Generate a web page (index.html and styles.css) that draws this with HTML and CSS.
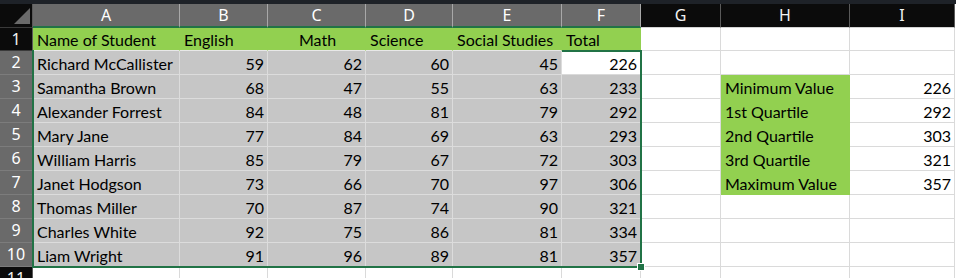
FILE: index.html
```html
<!DOCTYPE html>
<html lang="en">
<head>
  <meta charset="UTF-8" />
  <title>Quartiles</title>
  <link rel="stylesheet" href="styles.css">
</head>
<body>
  <div class="sheet">
    <div class="topbar"></div>

    <div class="grid">
      <!-- column headers -->
      <div class="corner">
        <svg width="16" height="16" viewBox="0 0 16 16"><polygon points="0,16 16,16 16,0" fill="#6a6a6a"/></svg>
      </div>
      <div class="ch on">A</div>
      <div class="ch on">B</div>
      <div class="ch on">C</div>
      <div class="ch on">D</div>
      <div class="ch on">E</div>
      <div class="ch on">F</div>
      <div class="ch">G</div>
      <div class="ch">H</div>
      <div class="ch">I</div>

      <!-- row 1 -->
      <div class="rh first">1</div>
      <div class="c head">Name of Student</div>
      <div class="c head">English</div>
      <div class="c head indent">Math</div>
      <div class="c head">Science</div>
      <div class="c head">Social Studies</div>
      <div class="c head">Total</div>
      <div class="c first"></div>
      <div class="c first"></div>
      <div class="c first"></div>

      <!-- row 2 -->
      <div class="rh on">2</div>
      <div class="c sel">Richard McCallister</div>
      <div class="c sel num">59</div>
      <div class="c sel num">62</div>
      <div class="c sel num">60</div>
      <div class="c sel num">45</div>
      <div class="c num active">226</div>
      <div class="c"></div>
      <div class="c"></div>
      <div class="c"></div>

      <!-- row 3 -->
      <div class="rh on">3</div>
      <div class="c sel">Samantha Brown</div>
      <div class="c sel num">68</div>
      <div class="c sel num">47</div>
      <div class="c sel num">55</div>
      <div class="c sel num">63</div>
      <div class="c sel num">233</div>
      <div class="c"></div>
      <div class="c label">Minimum Value</div>
      <div class="c num">226</div>

      <!-- row 4 -->
      <div class="rh on">4</div>
      <div class="c sel">Alexander Forrest</div>
      <div class="c sel num">84</div>
      <div class="c sel num">48</div>
      <div class="c sel num">81</div>
      <div class="c sel num">79</div>
      <div class="c sel num">292</div>
      <div class="c"></div>
      <div class="c label">1st Quartile</div>
      <div class="c num">292</div>

      <!-- row 5 -->
      <div class="rh on">5</div>
      <div class="c sel">Mary Jane</div>
      <div class="c sel num">77</div>
      <div class="c sel num">84</div>
      <div class="c sel num">69</div>
      <div class="c sel num">63</div>
      <div class="c sel num">293</div>
      <div class="c"></div>
      <div class="c label">2nd Quartile</div>
      <div class="c num">303</div>

      <!-- row 6 -->
      <div class="rh on">6</div>
      <div class="c sel">William Harris</div>
      <div class="c sel num">85</div>
      <div class="c sel num">79</div>
      <div class="c sel num">67</div>
      <div class="c sel num">72</div>
      <div class="c sel num">303</div>
      <div class="c"></div>
      <div class="c label">3rd Quartile</div>
      <div class="c num">321</div>

      <!-- row 7 -->
      <div class="rh on">7</div>
      <div class="c sel">Janet Hodgson</div>
      <div class="c sel num">73</div>
      <div class="c sel num">66</div>
      <div class="c sel num">70</div>
      <div class="c sel num">97</div>
      <div class="c sel num">306</div>
      <div class="c"></div>
      <div class="c label">Maximum Value</div>
      <div class="c num">357</div>

      <!-- row 8 -->
      <div class="rh on">8</div>
      <div class="c sel">Thomas Miller</div>
      <div class="c sel num">70</div>
      <div class="c sel num">87</div>
      <div class="c sel num">74</div>
      <div class="c sel num">90</div>
      <div class="c sel num">321</div>
      <div class="c"></div>
      <div class="c"></div>
      <div class="c"></div>

      <!-- row 9 -->
      <div class="rh on">9</div>
      <div class="c sel">Charles White</div>
      <div class="c sel num">92</div>
      <div class="c sel num">75</div>
      <div class="c sel num">86</div>
      <div class="c sel num">81</div>
      <div class="c sel num">334</div>
      <div class="c"></div>
      <div class="c"></div>
      <div class="c"></div>

      <!-- row 10 -->
      <div class="rh on">10</div>
      <div class="c sel">Liam Wright</div>
      <div class="c sel num">91</div>
      <div class="c sel num">96</div>
      <div class="c sel num">89</div>
      <div class="c sel num">81</div>
      <div class="c sel num">357</div>
      <div class="c"></div>
      <div class="c"></div>
      <div class="c"></div>

      <!-- row 11 -->
      <div class="rh">11</div>
      <div class="c"></div>
      <div class="c"></div>
      <div class="c"></div>
      <div class="c"></div>
      <div class="c"></div>
      <div class="c"></div>
      <div class="c"></div>
      <div class="c"></div>
      <div class="c"></div>
    </div>

    <!-- selection outline over A2:F10 -->
    <div class="selection">
      <div class="handle"></div>
    </div>
  </div>
</body>
</html>
```

FILE: styles.css
```css
body {
  margin: 0;
  padding: 0;
  background: #ffffff;
  overflow: hidden;
}

.sheet {
  position: relative;
  width: 956px;
  height: 278px;
  overflow: hidden;
  background: #ffffff;
}

.topbar {
  height: 4px;
  background: #1e2228;
}

.grid {
  display: grid;
  grid-template-columns: 33px 147px 88px 98px 87px 109px 79px 80px 129px 105px;
  grid-template-rows: 24px 23px repeat(9, 24px) 24px;
}

.grid > div {
  box-sizing: border-box;
  overflow: hidden;
  white-space: nowrap;
}

/* headers */
.corner {
  background: #0b0b0b;
  border-right: 1px solid #5a5a5a;
  border-bottom: 1px solid #3a3a3a;
  display: flex;
  justify-content: flex-end;
  align-items: flex-end;
  padding: 0 2px 3px 0;
}

.corner svg {
  display: block;
}

.ch {
  background: #0b0b0b;
  color: #f2f2f2;
  font-family: "Noto Sans", sans-serif;
  font-size: 16px;
  line-height: 22px;
  text-align: center;
  border-right: 1px solid #5a5a5a;
  border-bottom: 1px solid #d4d4d4;
  height: 24px;
  padding-bottom: 1px;
}

.ch.on {
  background: #6a6a6a;
  color: #ffffff;
  border-right-color: #a8a8a8;
  border-bottom: 2px solid #217346;
  padding-bottom: 0;
}

.rh {
  background: #0b0b0b;
  color: #f2f2f2;
  font-family: "Noto Sans", sans-serif;
  font-size: 16px;
  line-height: 22px;
  text-align: center;
  border-right: 1px solid #5a5a5a;
  border-bottom: 1px solid #3a3a3a;
}

.rh.on {
  background: #6a6a6a;
  color: #ffffff;
  border-bottom-color: #7c7c7c;
}

/* cells */
.c {
  font-family: Lato, "Liberation Sans", sans-serif;
  font-size: 16px;
  line-height: 23px;
  color: #000000;
  padding: 1px 4px 0 4px;
  border-right: 1px solid #dadada;
  border-bottom: 1px solid #dadada;
}

.c.head {
  background: #92d050;
  border-right-color: #92d050;
  border-bottom-color: #e8e8e8;
  line-height: 22px;
}

.c.first {
  line-height: 22px;
}

.c.indent {
  padding-left: 31px;
}

.c.sel {
  background: #c6c6c6;
  border-right-color: #dcdcdc;
  border-bottom-color: #dcdcdc;
}

.c.num {
  text-align: right;
  padding-right: 3px;
}

.c.label {
  background: #92d050;
  border-right-color: #92d050;
  border-bottom-color: #92d050;
}

.c.active {
  background: #ffffff;
}

/* selection outline */
.selection {
  position: absolute;
  left: 32px;
  top: 50px;
  width: 610px;
  height: 218px;
  box-sizing: border-box;
  border-left: 2px solid #217346;
  border-right: 2px solid #217346;
  border-bottom: 2px solid #217346;
}

.selection:before {
  content: "";
  position: absolute;
  left: 528px;
  right: -2px;
  top: 0;
  height: 2px;
  background: #217346;
}

.handle {
  position: absolute;
  right: -5px;
  bottom: -5px;
  width: 6px;
  height: 6px;
  background: #217346;
  border: 1px solid #ffffff;
}
```
